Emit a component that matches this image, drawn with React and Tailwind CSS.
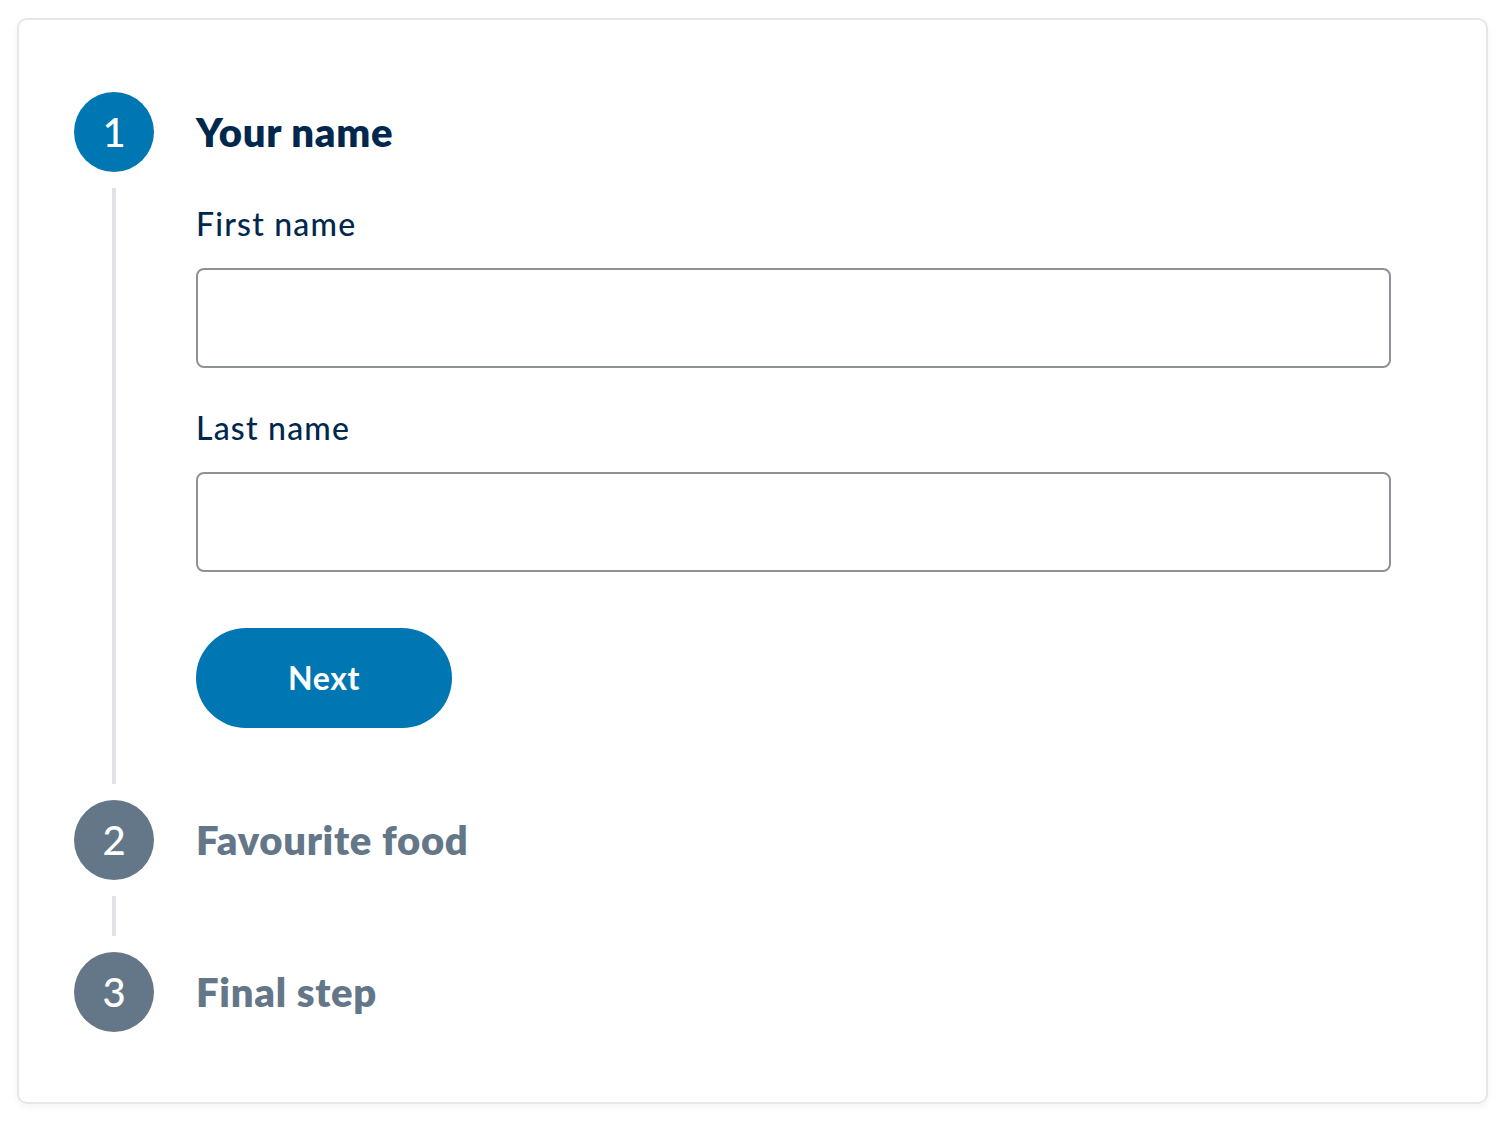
export default function App() {
  const font = { fontFamily: "Lato, 'Noto Sans', sans-serif" };
  return (
    <div className="min-h-[1130px] bg-white pt-[18px] pl-[17px]" style={font}>
      <div className="w-[1471px] rounded-[10px] border-2 border-[#e6e7e8] bg-white pl-[55px] pr-[95px] pt-[72px] pb-[70px] shadow-[0_3px_8px_rgba(0,0,0,0.05)]">
        {/* Step 1 */}
        <div className="flex">
          <div className="flex w-[80px] flex-col items-center">
            <div className="flex h-[80px] w-[80px] items-center justify-center rounded-full bg-[#0077b3] text-[40px] font-medium leading-none text-white">
              1
            </div>
            <div className="my-4 w-[4px] flex-1 bg-[#e1e2e6]" />
          </div>
          <div className="ml-[41px] flex-1 pb-[72px] pl-px">
            <div className="h-[80px] text-[40px] font-extrabold leading-[80px] tracking-[0.7px] text-[#00274d]">
              Your name
            </div>
            <div className="mt-[32px] text-[32px] font-medium leading-[40px] tracking-[1.2px] text-[#00274d]">
              First name
            </div>
            <div className="mt-6 h-[100px] w-full rounded-[8px] border-2 border-[#8e9297] bg-white" />
            <div className="mt-[40px] text-[32px] font-medium leading-[40px] tracking-[1.2px] text-[#00274d]">
              Last name
            </div>
            <div className="mt-6 h-[100px] w-full rounded-[8px] border-2 border-[#8e9297] bg-white" />
            <button className="mt-[56px] flex h-[100px] w-[256px] items-center justify-center rounded-full bg-[#0077b3] text-[32px] font-bold leading-none tracking-[0.6px] text-white">
              Next
            </button>
          </div>
        </div>
        {/* Step 2 */}
        <div className="flex">
          <div className="flex w-[80px] flex-col items-center">
            <div className="flex h-[80px] w-[80px] items-center justify-center rounded-full bg-[#647789] text-[40px] font-medium leading-none text-white">
              2
            </div>
            <div className="my-4 h-[40px] w-[4px] bg-[#e1e2e6]" />
          </div>
          <div className="ml-[41px] flex-1 pl-px">
            <div className="h-[80px] text-[40px] font-extrabold leading-[80px] tracking-[0.7px] text-[#647789]">
              Favourite food
            </div>
          </div>
        </div>
        {/* Step 3 */}
        <div className="flex">
          <div className="flex w-[80px] flex-col items-center">
            <div className="flex h-[80px] w-[80px] items-center justify-center rounded-full bg-[#647789] text-[40px] font-medium leading-none text-white">
              3
            </div>
          </div>
          <div className="ml-[41px] flex-1 pl-px">
            <div className="h-[80px] text-[40px] font-extrabold leading-[80px] tracking-[0.7px] text-[#647789]">
              Final step
            </div>
          </div>
        </div>
      </div>
    </div>
  );
}
